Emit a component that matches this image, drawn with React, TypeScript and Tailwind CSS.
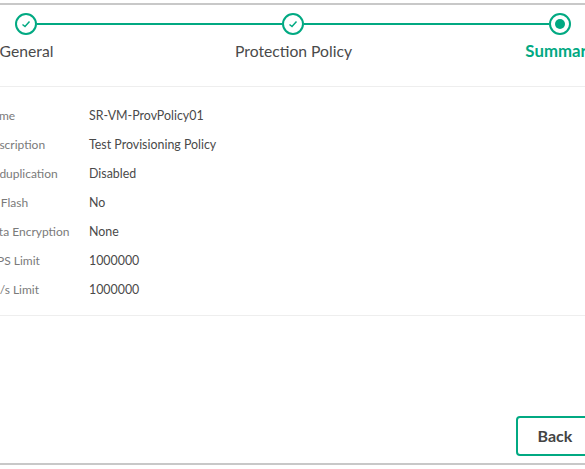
const rows = [
  ["Name", "SR-VM-ProvPolicy01"],
  ["Description", "Test Provisioning Policy"],
  ["Deduplication", "Disabled"],
  ["All Flash", "No"],
  ["Data Encryption", "None"],
  ["IOPS Limit", "1000000"],
  ["KB/s Limit", "1000000"],
];

function Done() {
  return (
    <div className="flex h-[22px] w-[22px] shrink-0 items-center justify-center rounded-full border-2 border-[#01a982]">
      <svg width="12" height="12" viewBox="0 0 12 12" fill="none">
        <path d="M2.5 6.5 L5 8.5 L9.5 3.5" stroke="#01a982" strokeWidth="1.5" />
      </svg>
    </div>
  );
}

export default function App() {
  return (
    <div className="h-[469px] w-[585px] overflow-hidden bg-white pt-[3px] font-['Lato','Liberation_Sans',sans-serif]">
      <div className="flex h-[462px] flex-col border-y-2 border-[#c8c8c8]">
        <div className="ml-[15px] mt-[8px] flex w-[556px] items-center">
          <Done />
          <div className="h-[1.5px] flex-1 bg-[#01a982]" />
          <Done />
          <div className="h-[1.5px] flex-1 bg-[#01a982]" />
          <div className="flex h-[22px] w-[22px] shrink-0 items-center justify-center rounded-full border-2 border-[#01a982]">
            <div className="h-[10px] w-[10px] rounded-full bg-[#01a982]" />
          </div>
        </div>
        <div className="ml-[-107px] mt-[2px] grid w-[801px] shrink-0 grid-cols-3 text-center text-[15.7px] leading-[28px] text-[#4a4a4a]">
          <div>General</div>
          <div>Protection Policy</div>
          <div className="text-[16.8px] font-bold text-[#01a982]">Summary</div>
        </div>
        <div className="mt-[21px] h-px shrink-0 bg-[#eeeeee]" />
        <div className="ml-[-16px] flex flex-col pt-[14px] leading-[29px]">
          {rows.map(([k, v]) => (
            <div key={k} className="flex">
              <div className="w-[105px] shrink-0 text-[12px] text-[#7a7a7a]">{k}</div>
              <div className="text-[12.4px] text-[#4a4a4a]">{v}</div>
            </div>
          ))}
        </div>
        <div className="mt-[11px] h-px shrink-0 bg-[#eeeeee]" />
        <div className="mb-[7px] ml-[516px] mt-auto flex h-[40px] w-[78px] shrink-0 items-center justify-center rounded-[4px] border-2 border-[#01a982] text-[16px] font-bold text-[#444444]">
          Back
        </div>
      </div>
    </div>
  );
}
